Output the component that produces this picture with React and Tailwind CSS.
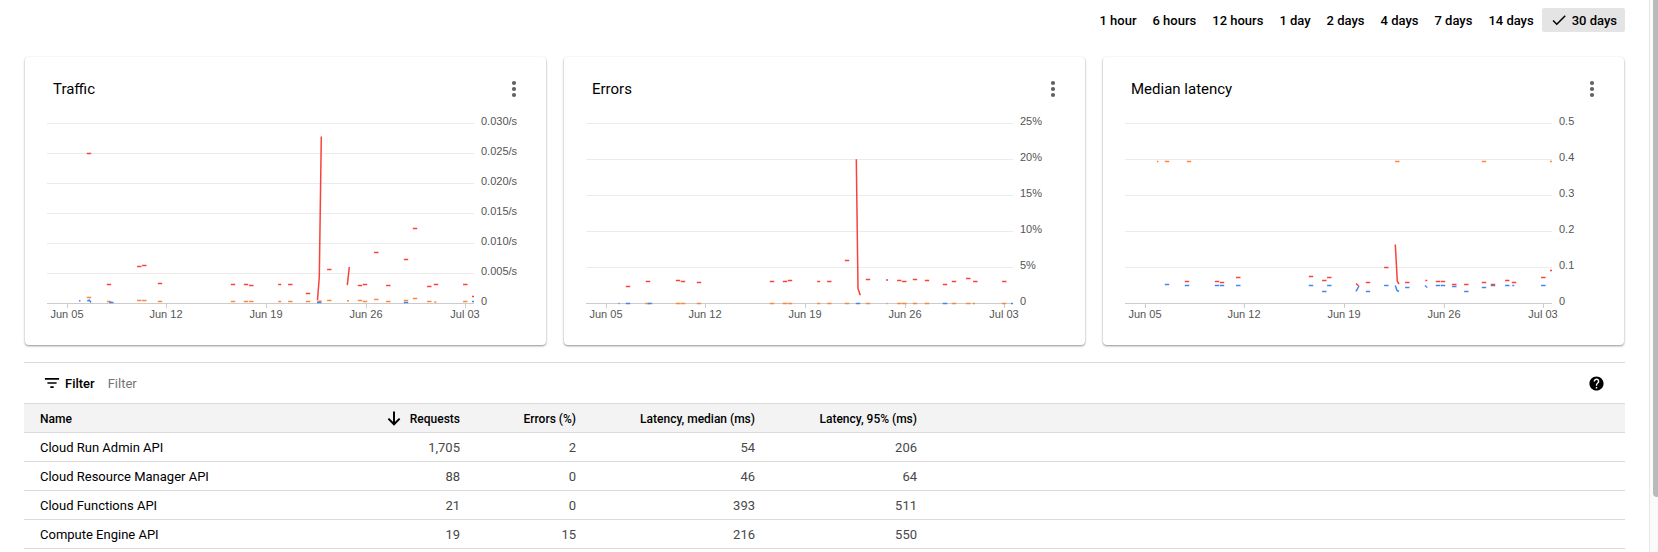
import React from "react";

const RED = "#f9423a";
const ORANGE = "#f9883e";
const BLUE = "#4285f4";

const RANGES = ["1 hour", "6 hours", "12 hours", "1 day", "2 days", "4 days", "7 days", "14 days", "30 days"];

const DATES = [
  [20, "Jun 05"],
  [119, "Jun 12"],
  [219, "Jun 19"],
  [319, "Jun 26"],
  [418, "Jul 03"],
];

// Each dash is [centre x, y, length]; the length defaults to 4.4.
const CHARTS = [
  {
    title: "Traffic",
    labels: ["0.030/s", "0.025/s", "0.020/s", "0.015/s", "0.010/s", "0.005/s", "0"],
    series: [
      {
        color: ORANGE,
        dashes: [
          [42, 174.5], [62, 178.5], [92.3, 177.5], [97.3, 177.5], [113, 178.5], [186, 178.5], [199, 178.5],
          [204.3, 178.5], [232.7, 178.5, 3], [243.3, 178.5], [261, 178.5], [272.5, 178.2], [282.3, 177.5],
          [301, 177.8, 2], [313, 177.5], [318, 178.5], [329.3, 176.5], [341.3, 178.5], [359, 177.5],
          [368, 175.5], [382.3, 178.5], [388.3, 179, 2], [418.3, 178.5],
        ],
        lines: [],
      },
      {
        color: BLUE,
        dashes: [[32.7, 177.8, 1.5], [64.3, 179.5], [272.2, 179.5], [359, 179.5], [426, 178.5, 2]],
        lines: ["40.3,178 42.3,177.2 44,179.5"],
      },
      {
        color: RED,
        dashes: [
          [42, 30.5], [62, 161.5], [92.3, 143.5], [97.3, 142.5], [113, 160.5], [186, 161.5], [199, 161.5],
          [204.3, 162.5], [232.7, 161.5, 3], [243.3, 161.5], [261, 170.5], [282.3, 146.5], [313, 162.5],
          [318, 161.5], [329.3, 129.5], [341.3, 162.5], [359, 136.5], [368, 105.5], [382.3, 163.5],
          [389, 161.5], [418.3, 161.5], [426, 173.5, 2],
        ],
        lines: ["270.5,177 272.3,154 274.3,13.5", "300.3,162.2 302.3,144"],
      },
    ],
  },
  {
    title: "Errors",
    labels: ["25%", "20%", "15%", "10%", "5%", "0"],
    series: [
      {
        color: ORANGE,
        dashes: [
          [61.5, 180.5], [92, 180.5], [97, 180.5], [113, 180.5], [186, 180.5], [199, 180.5], [204, 180.5],
          [232.7, 180.5, 3], [243.3, 180.5], [261, 180.5], [282, 180.5], [301, 180.5, 1], [313.3, 180.5],
          [318.3, 180.5], [329, 180.5], [341, 180.5], [368, 180.5], [382.3, 180.5], [388, 180.5, 2],
          [418, 180.5],
        ],
        lines: [],
      },
      {
        color: BLUE,
        dashes: [[33, 180.5, 1], [42, 180.5], [64, 180.5], [272, 180.5], [359, 180.5], [426, 180.5, 2]],
        lines: [],
      },
      {
        color: RED,
        dashes: [
          [42, 163.5], [62, 158.5], [92, 157.5], [97, 158.5], [113, 159.5], [186, 158.5], [199, 158.5],
          [204, 157.5], [232.7, 158.5, 3], [243.3, 158.5], [261, 137.5], [282, 156.5], [301, 157, 2],
          [313.3, 157.5], [318.3, 158.5], [329, 156.5], [341, 157.5], [359, 161.5], [368, 158.5],
          [382.3, 155.5], [389.3, 158.5], [418.3, 158.5],
        ],
        lines: ["270.3,36.2 272,165.5 274.3,172.2"],
      },
    ],
  },
  {
    title: "Median latency",
    labels: ["0.5", "0.4", "0.3", "0.2", "0.1", "0"],
    series: [
      {
        color: ORANGE,
        dashes: [[32.7, 38.5, 1.5], [42, 38.5], [64, 38.5], [272.3, 38.5], [359, 38.5], [426, 38.5, 2]],
        lines: [],
      },
      {
        color: BLUE,
        dashes: [
          [42, 161.5], [62, 162.5], [92, 162.5], [97, 162.5], [113.3, 162.5], [186, 162.5], [199.3, 168.5],
          [204.3, 162.5], [243, 168.5], [261.3, 162.5], [282.3, 164.5], [313, 162.5], [318, 162.5],
          [329.3, 163.5], [341.3, 168.5], [359, 164.5], [368, 162.5], [382.3, 162.5], [388.3, 162.5, 2],
          [418.3, 162.5],
        ],
        lines: ["231,168.3 234,163", "270.3,162.5 272,167.5 274,168.5", "300,162.5 302.3,164.5"],
      },
      {
        color: RED,
        dashes: [
          [62, 158.5], [92, 158.5], [97, 159.5], [113.3, 154.5], [186, 153.5], [199.3, 157.5],
          [204.3, 154.5], [243, 159.5], [261.3, 144.5], [282.3, 159.5], [301.3, 157.5, 2], [313, 158.5],
          [318, 158.5], [329.3, 161.5], [341.3, 161.5], [359, 159.5], [368, 161.5], [382.3, 157.5],
          [389, 159.5], [418.3, 154.5], [426, 147.5, 2],
        ],
        lines: ["231,160.5 233.7,163", "270.3,121.5 272.3,158.2 274,161.2"],
      },
    ],
  },
];

const ROWS = [
  ["Cloud Run Admin API", "1,705", "2", "54", "206"],
  ["Cloud Resource Manager API", "88", "0", "46", "64"],
  ["Cloud Functions API", "21", "0", "393", "511"],
  ["Compute Engine API", "19", "15", "216", "550"],
];

function Chart({ title, labels, series }) {
  const step = 180 / (labels.length - 1);
  return (
    <svg
      viewBox="-22 -10 521 232"
      role="img"
      aria-label={title}
      className="block h-auto w-full font-['Liberation_Sans',Arial,sans-serif] text-[11px]"
    >
      {labels.map((label, i) => (
        <g key={label}>
          <rect
            x="0"
            y={i * step}
            width="427"
            height="1"
            fill={i === labels.length - 1 ? "#cccccc" : "#ebebeb"}
          />
          <text x="434" y={i * step + 2} fill="#555555">
            {label}
          </text>
        </g>
      ))}
      {DATES.map(([x, label]) => (
        <g key={label}>
          <rect x={x} y="181" width="1" height="4" fill="#cccccc" />
          <text x={x} y="195" textAnchor="middle" fill="#555555">
            {label}
          </text>
        </g>
      ))}
      {series.map(({ color, dashes, lines }) => (
        <g key={color} fill="none" stroke={color} strokeWidth="1.5">
          {dashes.map(([x, y, w = 4.4]) => (
            <line key={`${x}-${y}`} x1={x - w / 2} x2={x + w / 2} y1={y} y2={y} />
          ))}
          {lines.map((points) => (
            <polyline key={points} points={points} />
          ))}
        </g>
      ))}
    </svg>
  );
}

function ChartCard(props) {
  return (
    <section className="rounded-sm bg-white shadow-[0_1px_2px_rgba(0,0,0,0.35),0_1px_3px_rgba(0,0,0,0.12)]">
      <header className="flex h-14 items-center justify-between pt-2 pr-5 pl-7">
        <h2 className="text-[15px] leading-6">{props.title}</h2>
        <button type="button" aria-label={`${props.title} options`} className="flex size-6 items-center justify-center">
          <svg viewBox="0 0 24 24" className="size-6" fill="#616161">
            <circle cx="12" cy="6" r="2.1" />
            <circle cx="12" cy="12" r="2.1" />
            <circle cx="12" cy="18" r="2.1" />
          </svg>
        </button>
      </header>
      <Chart {...props} />
    </section>
  );
}

export default function App() {
  return (
    <div className="flex min-h-screen bg-white font-[Roboto,sans-serif] text-black">
      <main className="min-w-0 flex-1 px-6 pt-2">
        <nav aria-label="Time range" className="flex h-6 justify-end text-[13px] leading-5 font-medium">
          {RANGES.map((range) => {
            const selected = range === "30 days";
            return (
              <button
                key={range}
                type="button"
                aria-pressed={selected}
                className={`flex items-center gap-1 rounded-xs px-2 ${selected ? "bg-[#e4e4e4]" : ""}`}
              >
                {selected && (
                  <svg viewBox="0 0 24 24" className="size-[18px]" aria-hidden="true">
                    <path d="M9 16.17L4.83 12l-1.42 1.41L9 19 21 7l-1.41-1.41z" />
                  </svg>
                )}
                <span className="pt-0.5">{range}</span>
              </button>
            );
          })}
        </nav>

        <div className="mt-6 grid grid-cols-3 gap-[18px] p-px">
          {CHARTS.map((chart) => (
            <ChartCard key={chart.title} {...chart} />
          ))}
        </div>

        <div className="mt-4 flex h-[41px] items-center border-t border-[#dadada] pr-5 pl-[18px] text-[13px] leading-5">
          <svg viewBox="0 0 24 24" className="mr-[3px] size-5" aria-hidden="true">
            <path d="M3.5 6h17v2h-17zM6.5 11h11v2h-11zM10 16h4v2h-4z" />
          </svg>
          <label htmlFor="filter" className="pt-px font-medium">
            Filter
          </label>
          <input
            id="filter"
            type="text"
            placeholder="Filter"
            className="ml-[13px] min-w-0 flex-1 bg-transparent pt-px outline-none placeholder:text-[#757575]"
          />
          <button type="button" aria-label="Help">
            <svg viewBox="0 0 24 24" className="size-[17px]">
              <path d="M12 2C6.48 2 2 6.48 2 12s4.48 10 10 10 10-4.48 10-10S17.52 2 12 2zm1 17h-2v-2h2v2zm2.07-7.75l-.9.92C13.45 12.9 13 13.5 13 15h-2v-.5c0-1.1.45-2.1 1.17-2.83l1.24-1.26c.37-.36.59-.86.59-1.41 0-1.1-.9-2-2-2s-2 .9-2 2H8c0-2.21 1.79-4 4-4s4 1.79 4 4c0 .88-.36 1.68-.93 2.25z" />
            </svg>
          </button>
        </div>

        <table className="w-full table-fixed border-separate border-spacing-0 border-t border-[#dadada] text-right text-[13px] leading-[26px]">
          <colgroup>
            <col className="w-[452px]" />
            <col className="w-[116px]" />
            <col className="w-[179px]" />
            <col className="w-[162px]" />
            <col />
          </colgroup>
          <thead className="bg-[#f3f3f3] text-[12px]">
            <tr className="[&>*]:border-b [&>*]:border-[#dadada] [&>*]:px-4 [&>*]:pt-0.5 [&>*]:pb-0 [&>*]:leading-[26px] [&>*]:font-medium">
              <th scope="col" aria-sort="descending">
                <div className="flex items-center justify-between">
                  <span>Name</span>
                  <button type="button" className="flex items-center gap-[7px]">
                    <svg viewBox="0 0 24 24" className="size-[18px]" fill="none" stroke="#000" strokeWidth="2.6" aria-hidden="true">
                      <path d="M12 2v17M4.5 11.5L12 19l7.5-7.5" />
                    </svg>
                    Requests
                  </button>
                </div>
              </th>
              <th scope="col">Errors (%)</th>
              <th scope="col">Latency, median (ms)</th>
              <th scope="col">Latency, 95% (ms)</th>
              <td />
            </tr>
          </thead>
          <tbody>
            {ROWS.map(([name, requests, errors, median, p95]) => (
              <tr key={name} className="text-[#484848] [&>*]:border-b [&>*]:border-[#dadada] [&>*]:px-4 [&>*]:pt-0.5 [&>*]:pb-0">
                <th scope="row" className="font-normal">
                  <div className="flex justify-between">
                    <span className="text-black">{name}</span>
                    <span>{requests}</span>
                  </div>
                </th>
                <td>{errors}</td>
                <td>{median}</td>
                <td>{p95}</td>
                <td />
              </tr>
            ))}
          </tbody>
        </table>
      </main>

      <div aria-hidden="true" className="flex w-[9px] shrink-0 border-l border-[#e8e8e8] bg-[#fafafa] pl-[3px]">
        <div className="h-[90vh] flex-1 rounded-bl bg-[#bababa]" />
      </div>
    </div>
  );
}
